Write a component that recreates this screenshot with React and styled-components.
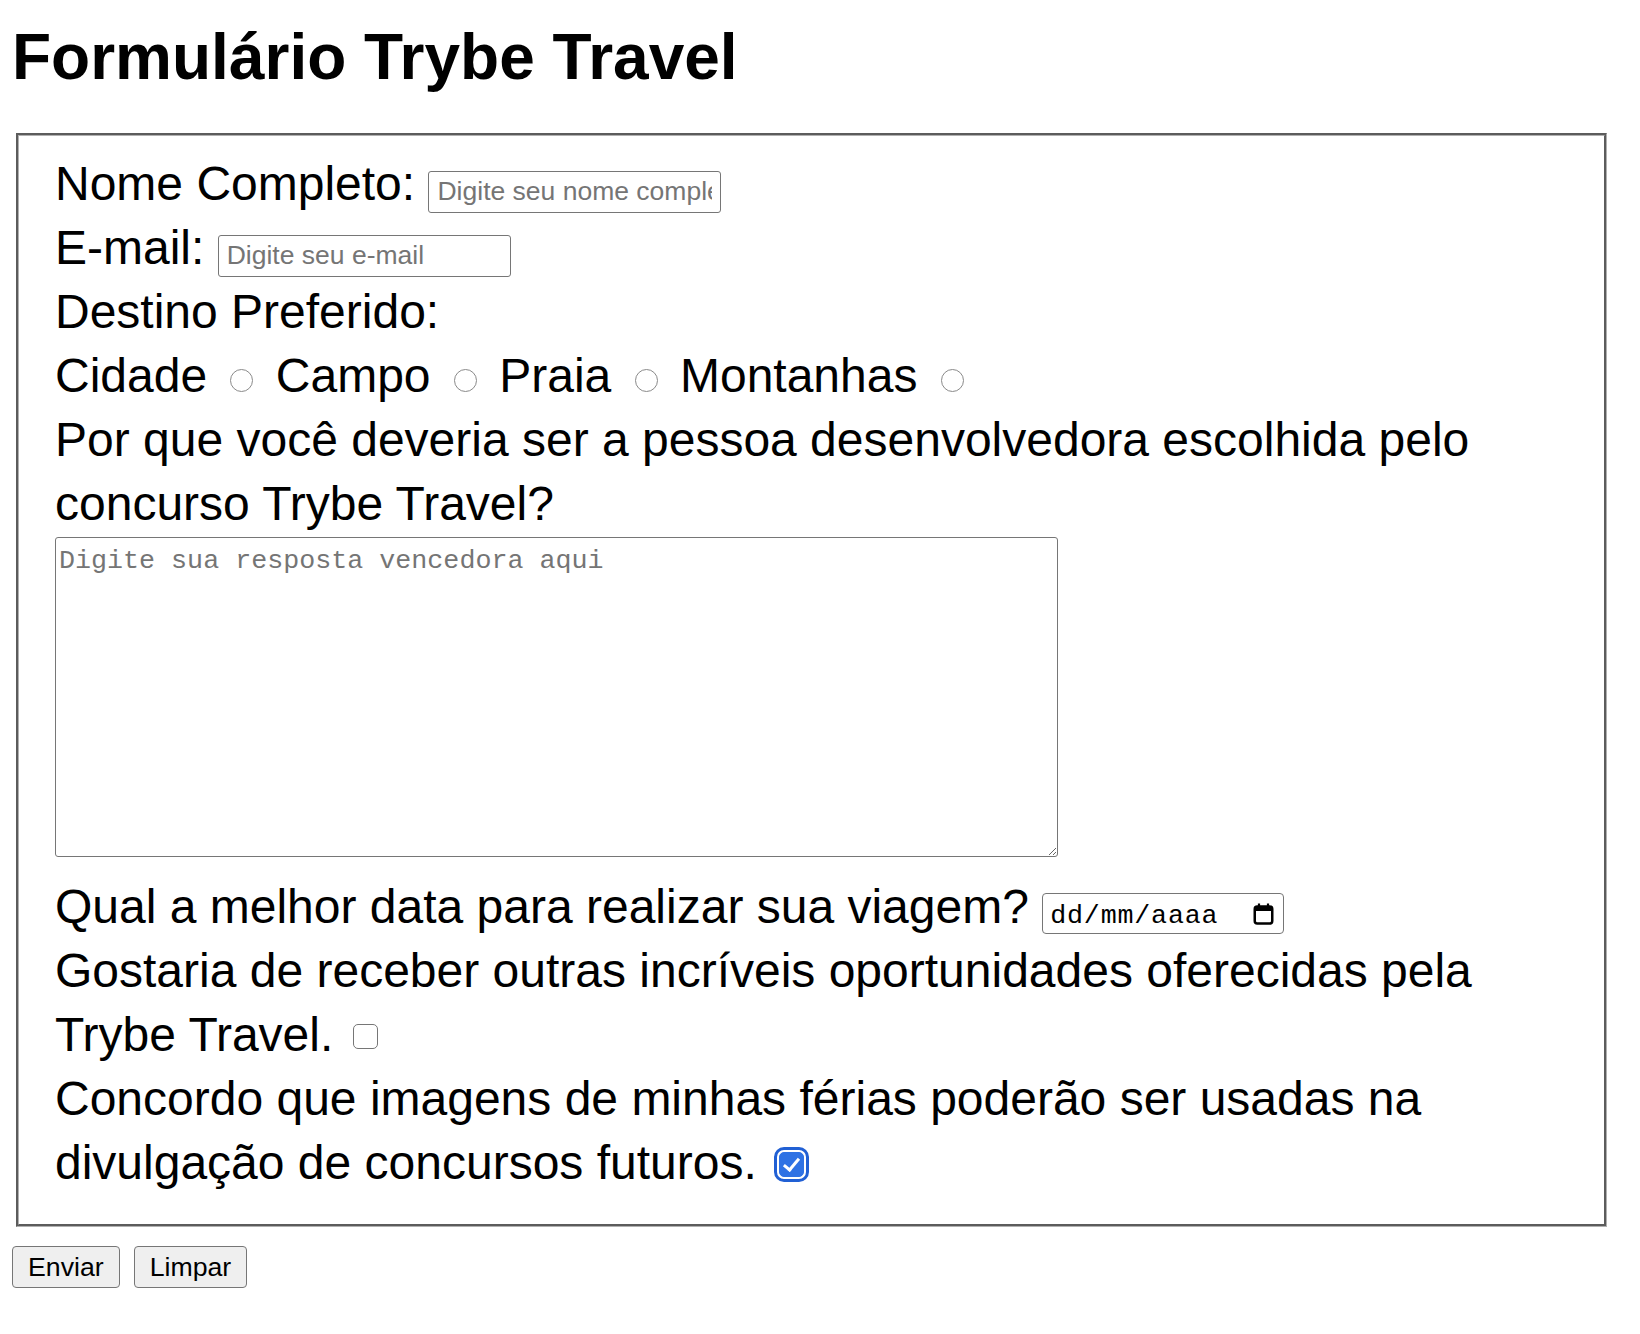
import styled, {createGlobalStyle} from 'styled-components';

const GlobalStyle = createGlobalStyle`
  body {
    margin: 0;
    background: #fff;
    color: #000;
    font-family: "Liberation Sans", Arial, sans-serif;
  }
`;

const Page = styled.div`
  padding: 20px 12px 40px;
`;

const Title = styled.h1`
  margin: 0 0 39px;
  font-size: 64px;
  line-height: 74px;
  font-weight: 700;
`;

const Fieldset = styled.fieldset`
  box-sizing: border-box;
  width: 1591px;
  min-width: 0;
  margin: 0 0 0 4px;
  padding: 16px 38px 29px 36px;
  border: 3px groove #b0b0b0;
  font-size: 48px;
  line-height: 64px;
`;

const Field = styled.label`
  display: block;
`;

const Line = styled.div``;

const RadioLabel = styled.label``;

const TextInput = styled.input`
  box-sizing: border-box;
  width: 293px;
  height: 42px;
  margin: 0;
  padding: 0 8px;
  border: 1.5px solid #767676;
  border-radius: 3px;
  font-family: "Liberation Sans", Arial, sans-serif;
  font-size: 26.5px;
  color: #000;
  vertical-align: baseline;
  &::placeholder {
    color: #757575;
  }
`;

const Radio = styled.input.attrs({type: 'radio'})`
  appearance: none;
  box-sizing: border-box;
  width: 23px;
  height: 23px;
  margin: 0 9px 0 10px;
  border: 1.5px solid #8a8a8a;
  border-radius: 50%;
  background: #fff;
  vertical-align: 0;
`;

const Check = styled.input.attrs({type: 'checkbox'})`
  appearance: none;
  position: relative;
  box-sizing: border-box;
  width: 25px;
  height: 25px;
  margin: 0 0 0 ${props => (props.$gap ? props.$gap : 6)}px;
  border: 1.5px solid #767676;
  border-radius: 5px;
  background: #fff;
  vertical-align: 2px;
  &:checked {
    background: #2f72e4;
    border-color: #2f72e4;
    outline: 3.5px solid #2160d4;
    outline-offset: 2.5px;
  }
  &:checked::after {
    content: '';
    position: absolute;
    left: 7px;
    top: 2px;
    width: 6px;
    height: 13px;
    border: solid #fff;
    border-width: 0 3px 3px 0;
    transform: rotate(40deg);
  }
`;

const TextArea = styled.textarea`
  display: block;
  box-sizing: border-box;
  width: 1003px;
  height: 320px;
  margin: 1px 0 18px;
  padding: 8px 3px;
  border: 1.5px solid #767676;
  border-radius: 3px;
  font-family: "Liberation Mono", "Courier New", monospace;
  font-size: 26.7px;
  color: #000;
  &::placeholder {
    color: #757575;
  }
`;

const DateBox = styled.span`
  display: inline-flex;
  align-items: center;
  justify-content: space-between;
  box-sizing: border-box;
  width: 242px;
  height: 41px;
  padding: 0 9px 0 7px;
  border: 1.5px solid #767676;
  border-radius: 4px;
  vertical-align: baseline;
`;

const DateText = styled.span`
  padding-top: 5px;
  font-family: "Liberation Mono", "Courier New", monospace;
  font-size: 26.7px;
  letter-spacing: 0.8px;
  line-height: 1;
  color: #000;
`;

const ButtonRow = styled.div`
  display: flex;
  gap: 14px;
  margin-top: 19px;
`;

const Button = styled.button`
  box-sizing: border-box;
  height: 42px;
  padding: 0 15px;
  background: #efefef;
  border: 1.5px solid #767676;
  border-radius: 4px;
  font-family: "Liberation Sans", Arial, sans-serif;
  font-size: 26.7px;
  color: #000;
`;

function CalendarIcon() {
  return (
    <svg width="21" height="22" viewBox="0 0 21 22" fill="none">
      <rect x="1.75" y="3.5" width="17.5" height="17" rx="2.5" stroke="#000" strokeWidth="2.5" />
      <rect x="1.75" y="3.5" width="17.5" height="4.5" fill="#000" />
      <path d="M6 0.5V4M15 0.5V4" stroke="#000" strokeWidth="2.2" />
    </svg>
  );
}

export default function App() {
  return (
    <Page>
      <GlobalStyle />
      <Title>Formulário Trybe Travel</Title>
      <form onSubmit={e => e.preventDefault()}>
        <Fieldset>
          <Field>
            Nome Completo: <TextInput type="text" placeholder="Digite seu nome completo" />
          </Field>
          <Field>
            E-mail: <TextInput type="email" placeholder="Digite seu e-mail" />
          </Field>
          <Line>Destino Preferido:</Line>
          <Line>
            <RadioLabel>
              Cidade <Radio name="destino" value="cidade" />
            </RadioLabel>{' '}
            <RadioLabel>
              Campo <Radio name="destino" value="campo" />
            </RadioLabel>{' '}
            <RadioLabel>
              Praia <Radio name="destino" value="praia" />
            </RadioLabel>{' '}
            <RadioLabel>
              Montanhas <Radio name="destino" value="montanhas" />
            </RadioLabel>
          </Line>
          <Field>
            Por que você deveria ser a pessoa desenvolvedora escolhida pelo concurso Trybe Travel?
            <TextArea placeholder="Digite sua resposta vencedora aqui" />
          </Field>
          <Field>
            Qual a melhor data para realizar sua viagem?{' '}
            <DateBox>
              <DateText>dd/mm/aaaa</DateText>
              <CalendarIcon />
            </DateBox>
          </Field>
          <Field>
            Gostaria de receber outras incríveis oportunidades oferecidas pela Trybe Travel. <Check />
          </Field>
          <Field>
            Concordo que imagens de minhas férias poderão ser usadas na divulgação de concursos
            futuros. <Check $gap={9} defaultChecked />
          </Field>
        </Fieldset>
        <ButtonRow>
          <Button type="submit">Enviar</Button>
          <Button type="reset">Limpar</Button>
        </ButtonRow>
      </form>
    </Page>
  );
}
